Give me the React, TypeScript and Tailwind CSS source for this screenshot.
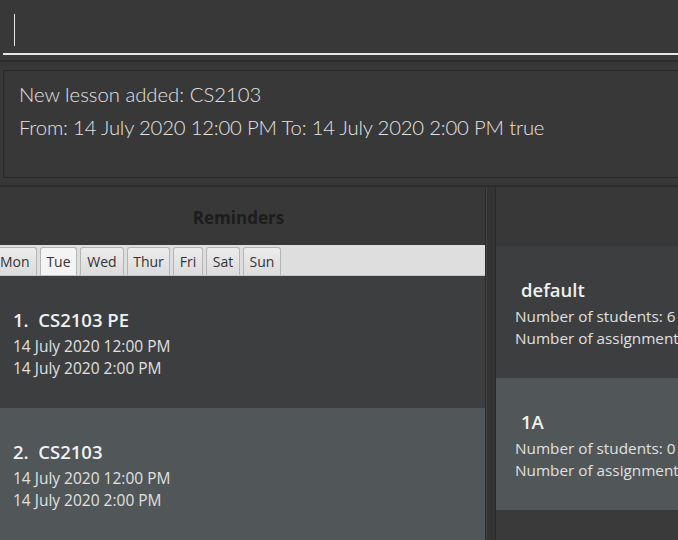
import React from 'react';

const reminders = [
  { no: 1, title: 'CS2103 PE', from: '14 July 2020 12:00 PM', to: '14 July 2020 2:00 PM', bg: 'bg-[#3c3e3f]' },
  { no: 2, title: 'CS2103', from: '14 July 2020 12:00 PM', to: '14 July 2020 2:00 PM', bg: 'bg-[#515658]' },
];

const classes = [
  { name: 'default', students: 6, bg: 'bg-[#3c3e3f]' },
  { name: '1A', students: 0, bg: 'bg-[#515658]' },
];

const days = [
  { label: 'Mon', w: 'w-[38px]', clip: true },
  { label: 'Tue', w: 'w-[37px]', active: true },
  { label: 'Wed', w: 'w-[44px]' },
  { label: 'Thur', w: 'w-[43px]' },
  { label: 'Fri', w: 'w-[30px]' },
  { label: 'Sat', w: 'w-[34px]' },
  { label: 'Sun', w: 'w-[38px]' },
];

export default function App() {
  return (
    <div className="w-[678px] h-[540px] overflow-hidden bg-[#383838] flex flex-col font-['Open_Sans',sans-serif]">
      {/* Command box */}
      <div className="h-[60px] shrink-0 pl-[3px] pt-[14px] flex flex-col">
        <div className="ml-[11px] w-[1px] h-[32px] bg-[#e6e6e6]" />
        <div className="mt-[7px] h-[2px] bg-[#e8e8e8]" />
      </div>
      <div className="h-[2px] shrink-0 bg-[#2c2c2c]" />

      {/* Result display */}
      <div className="h-[123px] shrink-0 pt-[8px] pl-[3px]">
        <div className="h-[108px] border border-[#262626] border-r-0 pl-[15px] pt-[7px] font-['Lato',sans-serif] font-light text-[20.3px] leading-[33px] text-[#e2e2e2]">
          <div>New lesson added: CS2103</div>
          <div className="tracking-[-0.18px]">From: 14 July 2020 12:00 PM To: 14 July 2020 2:00 PM true</div>
        </div>
      </div>
      <div className="h-[2px] shrink-0 bg-[#2c2c2c]" />

      {/* Panels */}
      <div className="flex-1 flex min-h-0">
        {/* Reminders */}
        <div className="w-[485px] shrink-0 flex flex-col">
          <div className="h-[58px] shrink-0 flex items-center justify-center pt-[4px] pr-[8px] text-[17px] font-bold text-[#1c1c1c]">
            Reminders
          </div>
          <div className="h-[31px] shrink-0 bg-[#dedede] border-b border-[#c4c4c4] flex items-end gap-[3px] overflow-hidden">
            {days.map((d) => (
              <div
                key={d.label}
                className={
                  'h-[28px] shrink-0 flex items-center justify-center rounded-t-[3px] border border-b-0 border-[#b4b4b4] text-[14px] text-[#333] ' +
                  d.w +
                  (d.active ? ' bg-[#f4f4f4]' : ' bg-gradient-to-b from-[#ececec] to-[#dcdcdc]') +
                  (d.clip ? ' border-l-0 rounded-tl-none -ml-[1px] justify-start pl-[1px]' : '')
                }
              >
                {d.label}
              </div>
            ))}
          </div>
          {reminders.map((r) => (
            <div key={r.no} className={'h-[132px] shrink-0 pl-[13px] pt-[32px] ' + r.bg}>
              <div className="text-[18.5px] leading-[24px] font-semibold text-[#f0f0f0] whitespace-pre">
                {r.no + '.  ' + r.title}
              </div>
              <div className="mt-[3px] text-[15.5px] leading-[22px] text-[#e0e0e0]">
                <div>{r.from}</div>
                <div>{r.to}</div>
              </div>
            </div>
          ))}
        </div>

        {/* Divider */}
        <div className="w-[11px] shrink-0 bg-[#333] border-l border-r border-[#2a2a2a] flex">
          <div className="w-[1px] bg-[#454545]" />
        </div>

        {/* Classes */}
        <div className="flex-1 min-w-0 overflow-hidden flex flex-col bg-[#3a3a3a]">
          <div className="h-[59px] shrink-0 bg-[#383838]" />
          {classes.map((c) => (
            <div key={c.name} className={'h-[132px] shrink-0 pl-[19px] pt-[32px] whitespace-nowrap ' + c.bg}>
              <div className="pl-[6px] text-[18.5px] leading-[24px] font-semibold text-[#f0f0f0]">{c.name}</div>
              <div className="mt-[3px] text-[15.3px] leading-[22px] text-[#e0e0e0]">
                <div>Number of students: {c.students}</div>
                <div>Number of assignments: 0</div>
              </div>
            </div>
          ))}
        </div>
      </div>
    </div>
  );
}
